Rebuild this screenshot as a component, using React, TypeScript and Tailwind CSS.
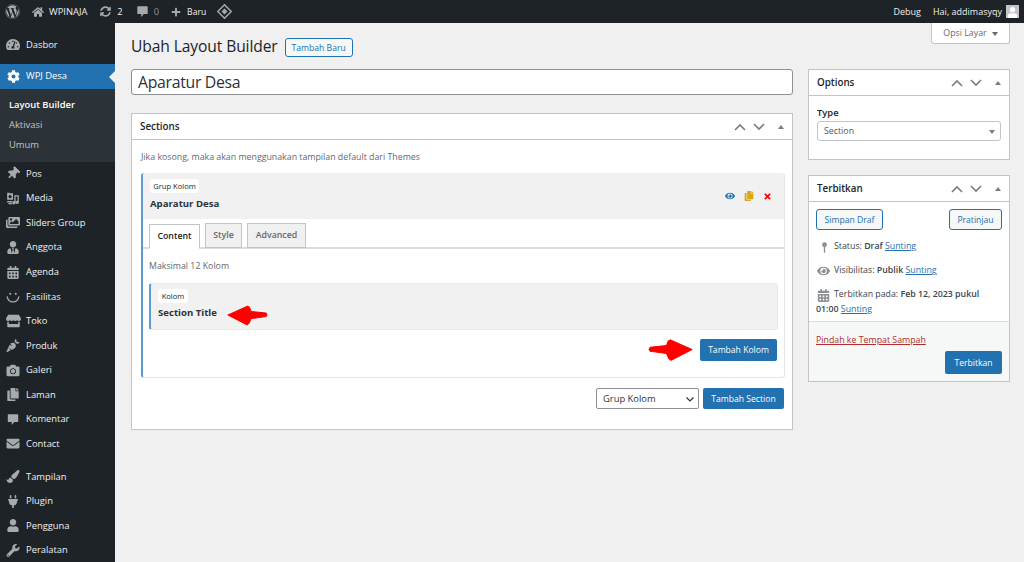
import React from 'react';
import {
  FaWordpress, FaHome, FaSyncAlt, FaPlus, FaTachometerAlt, FaCog, FaThumbtack, FaImages,
  FaUserTie, FaCalendarAlt, FaStore, FaCarrot, FaCamera, FaCopy, FaEnvelope, FaPaintBrush, FaPlug,
  FaUser, FaWrench, FaEye, FaTimes,
} from 'react-icons/fa';
import type { IconType } from 'react-icons';

type IconProps = { className?: string };

const Smile = ({ className }: IconProps) => (
  <svg className={className} viewBox="0 0 20 20" fill="none" stroke="currentColor">
    <path d="M1.5 9c1 6 5 8 8.500 8s7.500-2 8.500-8" strokeWidth="1.800" />
    <circle cx="6" cy="5.500" r="1.500" fill="currentColor" stroke="none" />
    <circle cx="14" cy="5.500" r="1.500" fill="currentColor" stroke="none" />
  </svg>
);

const Bubble = ({ className }: IconProps) => (
  <svg className={className} viewBox="0 0 20 20" fill="currentColor">
    <path d="M3 2h14a1 1 0 0 1 1 1v10a1 1 0 0 1-1 1h-5l-4 4.500V14H3a1 1 0 0 1-1-1V3a1 1 0 0 1 1-1z" />
  </svg>
);

const Pin = ({ className }: IconProps) => <FaThumbtack className={`rotate-45 ${className ?? ''}`} />;

const MediaIcon = ({ className }: IconProps) => (
  <svg className={className} viewBox="0 0 20 20" fill="currentColor">
    <path fillRule="evenodd" d="M1 1h3l1 1h5v10H1zM5.500 4.500a2.500 2.500 0 1 0 0 5 2.500 2.500 0 0 0 0-5z" />
    <path d="M1 14h8v2H1zM3 17h6v2H3z" />
    <path d="M12 5h7v11a2.500 2.500 0 1 1-2-2.400V7h-3v9.500a2.500 2.500 0 1 1-2-2.400z" />
  </svg>
);

const PostStatus = ({ className }: IconProps) => (
  <svg className={className} viewBox="0 0 10 16" fill="currentColor">
    <circle cx="5" cy="4" r="3.500" />
    <path d="M4 7h2v8l-1 1-1-1z" />
  </svg>
);

const MenuItem = ({ icon: Icon, label, iconClass }: { icon: IconType | React.FC<IconProps>; label: string; iconClass?: string }) => (
  <div className="flex h-[24.55px] items-center text-[#f0f0f1]">
    <div className="flex w-[26px] justify-center">
      <Icon className={`text-[#a7aaad] ${iconClass ?? 'h-[13px] w-[14px]'}`} />
    </div>
    <span>{label}</span>
  </div>
);

const Sidebar = () => (
  <aside className="w-[115px] shrink-0 bg-[#1d2327] pt-[9.5px] text-[9.4px]">
    <MenuItem icon={FaTachometerAlt} label="Dasbor" />
    <div className="h-[7px]" />
    <div className="relative flex h-[25px] items-center bg-[#2271b1] text-white">
      <div className="flex w-[26px] justify-center">
        <FaCog className="h-[13px] w-[13px]" />
      </div>
      <span>WPJ Desa</span>
      <div className="absolute right-0 top-[7px] h-0 w-0 border-y-[6px] border-r-[6px] border-y-transparent border-r-[#f0f0f1]" />
    </div>
    <div className="flex h-[72.5px] flex-col bg-[#2c3338] pt-[5.5px] text-[#c3c4c7]">
      <div className="flex h-[20.4px] items-center pl-[9px] font-semibold text-white">Layout Builder</div>
      <div className="flex h-[20.4px] items-center pl-[9px]">Aktivasi</div>
      <div className="flex h-[20.4px] items-center pl-[9px]">Umum</div>
    </div>
    <MenuItem icon={Pin} label="Pos" />
    <MenuItem icon={MediaIcon} label="Media" />
    <MenuItem icon={FaImages} label="Sliders Group" />
    <MenuItem icon={FaUserTie} label="Anggota" />
    <MenuItem icon={FaCalendarAlt} label="Agenda" />
    <MenuItem icon={Smile} label="Fasilitas" iconClass="h-[14px] w-[14px]" />
    <MenuItem icon={FaStore} label="Toko" iconClass="h-[14px] w-[15px]" />
    <MenuItem icon={FaCarrot} label="Produk" />
    <MenuItem icon={FaCamera} label="Galeri" />
    <MenuItem icon={FaCopy} label="Laman" />
    <MenuItem icon={Bubble} label="Komentar" />
    <MenuItem icon={FaEnvelope} label="Contact" />
    <div className="h-[8.5px]" />
    <MenuItem icon={FaPaintBrush} label="Tampilan" />
    <MenuItem icon={FaPlug} label="Plugin" />
    <MenuItem icon={FaUser} label="Pengguna" />
    <MenuItem icon={FaWrench} label="Peralatan" />
  </aside>
);

const AdminBar = () => (
  <header className="flex h-[23px] shrink-0 items-center bg-[#1d2327] text-[9.400px] text-[#f0f0f1]">
    <FaWordpress className="ml-[5px] h-[15px] w-[15px] text-[#a7aaad]" />
    <FaHome className="ml-[12px] h-[12px] w-[12px] text-[#a7aaad]" />
    <span className="ml-[5px] pt-[1px]">WPINAJA</span>
    <FaSyncAlt className="ml-[13px] h-[11px] w-[11px] text-[#a7aaad]" />
    <span className="ml-[6px] pt-[1px]">2</span>
    <Bubble className="ml-[13px] h-[13px] w-[13px] text-[#a7aaad]" />
    <span className="ml-[5px] pt-[1px] text-[#8c8f94]">0</span>
    <FaPlus className="ml-[12px] h-[10px] w-[10px] text-[#a7aaad]" />
    <span className="ml-[6px] pt-[1px] text-[8.6px]">Baru</span>
    <svg className="ml-[11px] h-[15px] w-[15px] text-[#a7aaad]" viewBox="0 0 20 20" fill="none" stroke="currentColor">
      <path d="M10 1l9 9-9 9-9-9z" strokeWidth="2" />
      <path d="M10 6l4 4-4 4-4-4z" fill="currentColor" stroke="none" />
    </svg>
    <span className="ml-auto pt-[1px] text-[9px]">Debug</span>
    <span className="ml-[12px] pt-[1px] text-[9px]">Hai, addimasyqy</span>
    <div className="ml-[4px] mr-[5px] flex h-[13px] w-[13px] items-end justify-center overflow-hidden bg-[#c3c4c7]">
      <FaUser className="h-[11px] w-[11px] text-white" />
    </div>
  </header>
);

const BoxControls = () => (
  <div className="ml-auto flex items-center text-[#787c82]">
    <svg className="h-[10px] w-[12px]" viewBox="0 0 12 10" fill="none" stroke="currentColor" strokeWidth="1.600">
      <path d="M1 8l5-5 5 5" />
    </svg>
    <svg className="ml-[7px] h-[10px] w-[12px]" viewBox="0 0 12 10" fill="none" stroke="currentColor" strokeWidth="1.600">
      <path d="M1 2l5 5 5-5" />
    </svg>
    <div className="ml-[13px] mr-[8px] h-0 w-0 border-x-[3.500px] border-b-[4.500px] border-x-transparent border-b-[#787c82]" />
  </div>
);

const Postbox = ({ title, children, className }: { title: string; children: React.ReactNode; className?: string }) => (
  <section className={`border border-[#c3c4c7] bg-white ${className ?? ''}`}>
    <div className="flex h-[26px] items-center border-b border-[#c3c4c7] pl-[8px] text-[9.800px] font-semibold text-[#1d2327]">
      <span className="pt-[2px]">{title}</span>
      <BoxControls />
    </div>
    {children}
  </section>
);

const PrimaryButton = ({ label, className }: { label: string; className?: string }) => (
  <div className={`flex items-center justify-center rounded-[2px] bg-[#2271b1] pt-[1px] text-[8.600px] text-white ${className ?? ''}`}>
    {label}
  </div>
);

const OutlineButton = ({ label, className }: { label: string; className?: string }) => (
  <div className={`flex items-center justify-center rounded-[3px] border border-[#2271b1] bg-[#f6f7f7] pt-[1px] text-[8.600px] text-[#2271b1] ${className ?? ''}`}>
    {label}
  </div>
);

const Badge = ({ label, className }: { label: string; className?: string }) => (
  <div className={`flex items-center justify-center rounded-[3px] bg-white pt-[1px] text-[7.600px] text-[#1d2327] ${className ?? ''}`}>
    {label}
  </div>
);

const Tab = ({ label, active, className }: { label: string; active?: boolean; className?: string }) => (
  <div
    className={`flex h-[25px] items-center justify-center border border-[#c3c4c7] pt-[1px] text-[8.800px] font-semibold ${
      active ? 'border-b-white bg-white text-[#1d2327]' : 'bg-[#f0f0f1] text-[#646970]'
    } ${className ?? ''}`}
  >
    {label}
  </div>
);

const Link = ({ children }: { children: React.ReactNode }) => (
  <span className="text-[#2271b1] underline">{children}</span>
);

const Arrow = ({ className, flip }: { className: string; flip?: boolean }) => (
  <svg className={`absolute ${flip ? '-scale-x-100' : ''} ${className}`} viewBox="0 0 40 20" fill="#ff0000">
    <path d="M1 10L20 1.500l2 1 1.500 4 14.500 1.500 1 2-1 1.500-14.500 2-2 4.500-2 1.500z" stroke="#ff0000" strokeLinejoin="round" />
  </svg>
);

const Editor = () => (
  <div className="w-[662px]">
    <div className="flex h-[26px] items-center rounded-[3px] border border-[#8c8f94] bg-white pl-[6px] pt-[2px] text-[15.800px] tracking-[-0.3px] text-[#2c3338]">
      Aparatur Desa
    </div>
    <Postbox title="Sections" className="mt-[18px] h-[317px]">
      <div className="pl-[9px] pr-[8px]">
        <p className="mt-[11px] text-[8.800px] leading-[13px] text-[#646970]">
          Jika kosong, maka akan menggunakan tampilan default dari Themes
        </p>
        <div className="relative mt-[9px] h-[205px] w-[644px] rounded-[3px] border-b border-r border-[#e5e5e5] border-l-2 border-l-[#5b9bd1]">
          <div className="flex h-[46px] rounded-t-[3px] bg-[#f1f1f1] pl-[7px]">
            <div className="pt-[6px]">
              <Badge label="Grup Kolom" className="h-[14px] w-[49px]" />
              <div className="mt-[4px] text-[9.600px] font-bold leading-[14px] text-[#2c3338]">Aparatur Desa</div>
            </div>
            <div className="ml-auto mr-[12px] flex items-center gap-[9px]">
              <FaEye className="h-[10px] w-[10px] text-[#2271b1]" />
              <FaCopy className="h-[10px] w-[10px] text-[#dba617]" />
              <FaTimes className="h-[9px] w-[9px] text-[#ff0000]" />
            </div>
          </div>
          <div className="flex h-[30px] items-end gap-[5px] border-b-2 border-[#dcdcde] pl-[6px]">
            <Tab label="Content" active className="-mb-[2px] w-[51px]" />
            <Tab label="Style" className="-mb-[1px] w-[37px]" />
            <Tab label="Advanced" className="-mb-[1px] w-[59px]" />
          </div>
          <div className="pl-[6px] pr-[7px]">
            <p className="mt-[11px] text-[8.800px] leading-[13px] text-[#646970]">Maksimal 12 Kolom</p>
            <div className="relative mt-[10px] h-[47px] w-[629px] rounded-[3px] border border-[#e8e8e8] border-l-2 border-l-[#5b9bd1] bg-[#f1f1f1] pl-[7px] pt-[5px]">
              <Badge label="Kolom" className="h-[14px] w-[30px]" />
              <div className="mt-[3px] text-[9.600px] font-bold leading-[14px] text-[#2c3338]">Section Title</div>
            </div>
            <div className="mt-[9px] flex justify-end">
              <PrimaryButton label="Tambah Kolom" className="h-[22px] w-[77px]" />
            </div>
          </div>
          <Arrow className="left-[84px] top-[131px] h-[22px] w-[41px]" />
          <Arrow flip className="left-[505px] top-[165px] h-[23px] w-[45px]" />
        </div>
        <div className="mt-[10px] flex justify-end gap-[4px]">
          <div className="flex h-[21px] w-[103px] items-center justify-between rounded-[2px] border border-[#8c8f94] bg-white pl-[6px] pr-[4px] pt-[1px] text-[9.400px] text-[#2c3338]">
            Grup Kolom
            <svg className="h-[8px] w-[8px]" viewBox="0 0 8 8" fill="none" stroke="#2c3338" strokeWidth="1.200">
              <path d="M0.500 2.500L4 6l3.500-3.500" />
            </svg>
          </div>
          <PrimaryButton label="Tambah Section" className="h-[21px] w-[81px]" />
        </div>
      </div>
    </Postbox>
  </div>
);

const SideColumn = () => (
  <div className="ml-[15px] w-[202px]">
    <Postbox title="Options" className="h-[91px]">
      <div className="px-[8px] pt-[10px]">
        <div className="text-[9.400px] font-semibold leading-[13px] text-[#1d2327]">Type</div>
        <div className="mt-[2px] flex h-[20px] items-center justify-between rounded-[3px] border border-[#c3c4c7] bg-white pl-[6px] pr-[5px] pt-[1px] text-[8.800px] text-[#50575e]">
          Section
          <div className="h-0 w-0 border-x-[3.500px] border-t-[4px] border-x-transparent border-t-[#787c82]" />
        </div>
      </div>
    </Postbox>
    <Postbox title="Terbitkan" className="mt-[15px] h-[207px]">
      <div className="flex justify-between px-[7px] pt-[7px]">
        <OutlineButton label="Simpan Draf" className="h-[21px] w-[67px]" />
        <OutlineButton label="Pratinjau" className="h-[21px] w-[53px]" />
      </div>
      <div className="px-[7px] text-[8.800px] text-[#3c434a]">
        <div className="mt-[10px] flex h-[14px] items-center">
          <div className="flex w-[15px] justify-center pl-[1px]">
            <PostStatus className="h-[11px] w-[7px] text-[#8c8f94]" />
          </div>
          <span className="ml-[3px]">
            Status: <b className="font-semibold">Draf</b> <Link>Sunting</Link>
          </span>
        </div>
        <div className="mt-[10px] flex h-[14px] items-center">
          <div className="flex w-[14px] justify-center">
            <FaEye className="h-[12px] w-[13px] text-[#8c8f94]" />
          </div>
          <span className="ml-[4px]">
            Visibilitas: <b className="font-semibold">Publik</b> <Link>Sunting</Link>
          </span>
        </div>
        <div className="mt-[10px] flex h-[14px] items-center">
          <div className="flex w-[14px] justify-center">
            <FaCalendarAlt className="h-[13px] w-[13px] text-[#8c8f94]" />
          </div>
          <span className="ml-[4px]">
            Terbitkan pada: <b className="font-semibold">Feb 12, 2023 pukul</b>
          </span>
        </div>
        <div className="mt-[1px] h-[14px]">
          <b className="font-semibold">01:00</b> <Link>Sunting</Link>
        </div>
      </div>
      <div className="mt-[4px] h-[60px] border-t border-[#dcdcde] bg-[#f6f7f7] px-[7px]">
        <div className="pt-[11px] text-[8.800px] leading-[14px] text-[#b32d2e] underline">Pindah ke Tempat Sampah</div>
        <div className="mt-[4px] flex justify-end">
          <PrimaryButton label="Terbitkan" className="h-[23px] w-[57px]" />
        </div>
      </div>
    </Postbox>
  </div>
);

export default function App() {
  return (
    <div className="relative flex h-[562px] w-[1024px] flex-col overflow-hidden bg-[#f0f0f1] font-['Open_Sans','Liberation_Sans',sans-serif]">
      <AdminBar />
      <div className="flex min-h-0 flex-1">
        <Sidebar />
        <main className="pl-[16px]">
          <div className="flex h-[46px] items-center pt-[2px]">
            <h1 className="text-[15.600px] tracking-[-0.1px] text-[#1d2327]">Ubah Layout Builder</h1>
            <OutlineButton label="Tambah Baru" className="ml-[7px] mt-[1px] h-[19px] w-[68px]" />
          </div>
          <div className="flex">
            <Editor />
            <SideColumn />
          </div>
        </main>
      </div>
      <div className="absolute left-[931px] top-[23px] flex h-[21px] w-[79px] items-center justify-center gap-[5px] rounded-b-[3px] border border-t-0 border-[#c3c4c7] bg-white pt-[2px] text-[8.800px] text-[#646970]">
        Opsi Layar
        <div className="h-0 w-0 border-x-[3.500px] border-t-[4px] border-x-transparent border-t-[#646970]" />
      </div>
    </div>
  );
}
